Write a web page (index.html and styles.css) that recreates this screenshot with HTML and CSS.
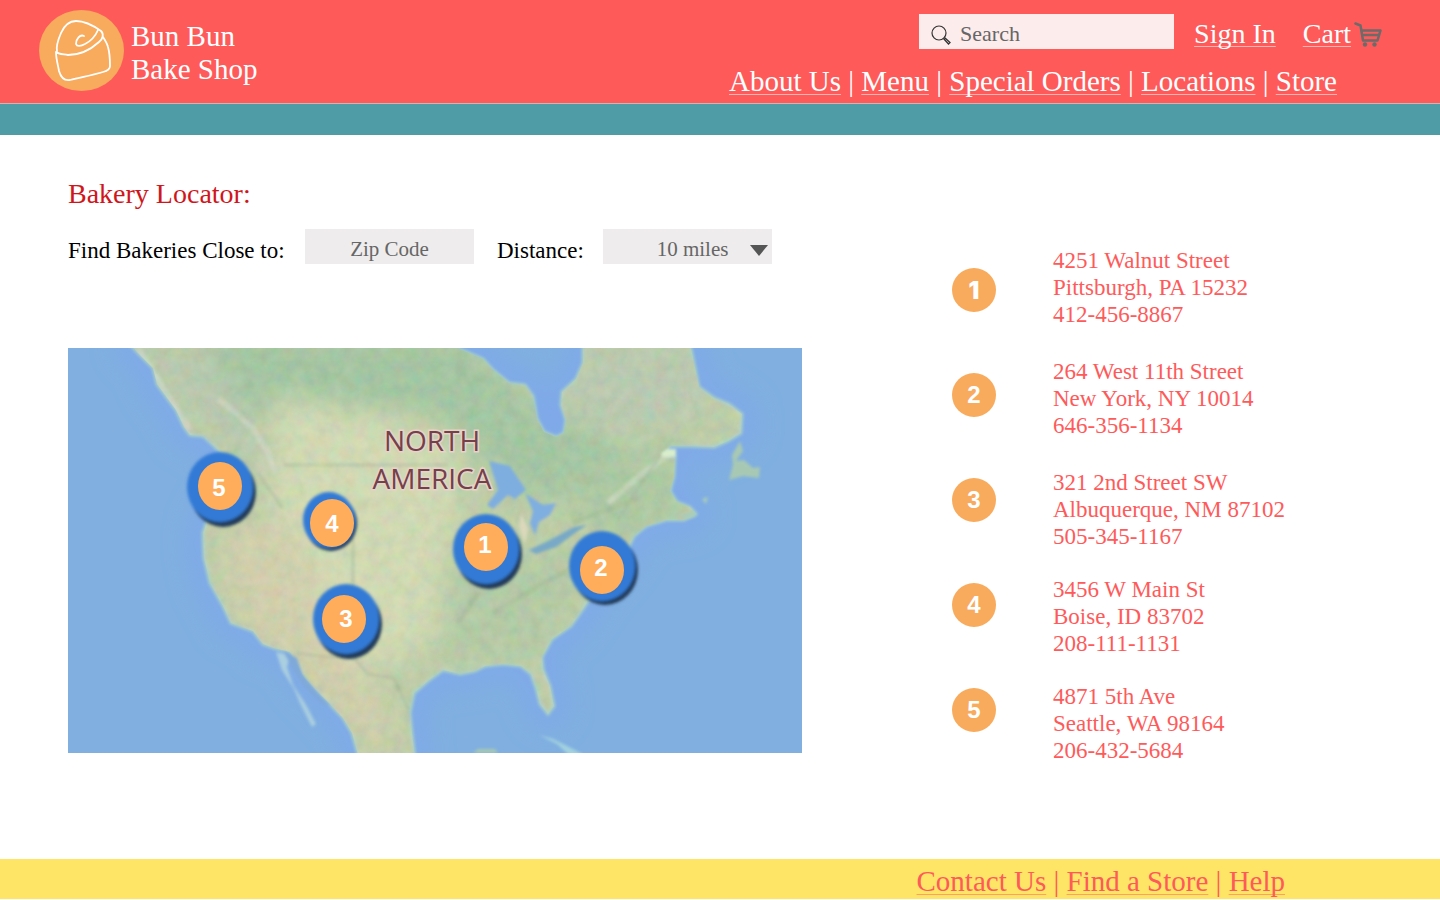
FILE: index.html
```html
<!DOCTYPE html>
<html lang="en">
<head>
<meta charset="utf-8">
<title>Bun Bun Bake Shop – Bakery Locator</title>
<link rel="stylesheet" href="styles.css">
</head>
<body>
<header class="header">
  <div class="brand">
    <svg class="brand-mark" viewBox="0 0 85 81" aria-hidden="true">
      <ellipse cx="42.500" cy="40.500" rx="42.500" ry="40.500" fill="#f8ab5d"/>
      <g fill="none" stroke="#fff" stroke-width="1.800" stroke-linecap="round" stroke-linejoin="round">
        <path d="M18 41C17 36 19 30 22 23C26 14 31 11 37 11C45 11 55 16 62 21C65 24 64 29 60 32C49 42 37 45 29 45C23 44 19 44 17 42C17 49 19 55 20 61C22 68 25 71 31 70C43 67 54 65 64 62C68 61 71 59 71 56C71 49 71 44 69 37C68 33 66 30 64 27"/>
        <path d="M45 26C41 24 37 29 37 34C38 37 42 36 46 34C52 31 56 27 59 20"/>
      </g>
    </svg>
    <div class="brand-name">Bun Bun<br>Bake Shop</div>
  </div>
  <div class="header-side">
    <div class="account">
      <label class="search">
        <svg class="search-icon" viewBox="0 0 20 20" aria-hidden="true"><circle cx="8" cy="8" r="7" fill="none" stroke="#333" stroke-width="1.200"/><path d="M12.500 13.500L17.500 19L19 17.500L13.500 12.500" fill="none" stroke="#333" stroke-width="1.300"/></svg>
        <input class="search-input" type="search" placeholder="Search" aria-label="Search">
      </label>
      <a class="link" href="#">Sign In</a>
      <span class="cart">
        <a class="link" href="#">Cart</a>
        <svg class="cart-icon" viewBox="0 0 28 25" aria-hidden="true"><path d="M1.500 1.500L6.500 3.500L9 18.500H23.500L26.500 8.500H9M9.500 13H24" fill="none" stroke="#6d6a6a" stroke-width="2.500" stroke-linecap="round" stroke-linejoin="round"/><circle cx="11" cy="22.500" r="2.200" fill="#6d6a6a"/><circle cx="20.500" cy="22.500" r="2.200" fill="#6d6a6a"/></svg>
      </span>
    </div>
    <nav class="nav"><a class="link" href="#">About Us</a> | <a class="link" href="#">Menu</a> | <a class="link" href="#">Special Orders</a> | <a class="link" href="#">Locations</a> | <a class="link" href="#">Store</a></nav>
  </div>
</header>
<div class="band"></div>
<main class="main">
  <section class="finder">
    <h1 class="title">Bakery Locator:</h1>
    <form class="filters">
      <label class="label" for="zip">Find Bakeries Close to:</label>
      <input class="field" id="zip" type="text" placeholder="Zip Code">
      <label class="label" for="distance">Distance:</label>
      <span class="select-wrap">
        <select class="field select" id="distance"><option>10 miles</option></select>
        <svg class="caret" viewBox="0 0 18 11" aria-hidden="true"><path d="M0 0H18L9 11Z" fill="#555"/></svg>
      </span>
    </form>
    <svg class="map" viewBox="0 0 734 405" role="img" aria-label="Map of bakeries in North America">
      <defs>
        <filter id="soft" x="-30%" y="-30%" width="160%" height="160%"><feGaussianBlur stdDeviation="13"/></filter>
        <filter id="edge"><feGaussianBlur stdDeviation="1.500"/></filter>
        <filter id="grain" x="0" y="0" width="100%" height="100%">
          <feTurbulence type="fractalNoise" baseFrequency="0.080" numOctaves="3" seed="8"/>
          <feColorMatrix values="0.900 0 0 0 0.200  0 0.700 0 0 0.350  0 0 0.700 0 0.200  0 0 0 0 0.220"/>
        </filter>
        <path id="land" d="M62 -4L70 5L85 20L89 36L97 47L108 62L116 79L122 87L135 88L146 98L158 110L160 140L140 170L135 185L136 210L142 235L155 258L163 275L185 283L195 296L206 300L222 304L230 318L236 329L247 341L260 354L275 370L284 385L291 410H347L344 385L342 365L346 345L360 333L375 322L392 326L407 323L417 318L435 316L453 318L463 326L468 340L472 356L480 366L486 358L482 338L475 321L474 309L484 291L503 278L515 261L526 244L558 205L566 188L578 178L598 172L616 172L628 166L622 159L609 154L602 143L606 128L607 110L596 106L602 98L622 98L646 99L660 93L673 85L674 66L661 56L646 50L631 39L627 20L622 -4H515L515 15L508 31L494 44L493 57L498 72L496 85L488 89L476 84L469 71L465 48L457 37L441 35L425 22L415 11L380 -4Z"/>
        <clipPath id="land-clip"><use href="#land"/></clipPath>
      </defs>
      <rect width="734" height="405" fill="#80afe0"/>
      <use href="#land" fill="none" stroke="#7fa9e9" stroke-width="26" stroke-linejoin="round" filter="url(#soft)"/>
      <use href="#land" fill="#b7c99f" stroke="#a6cfc9" stroke-width="3" filter="url(#edge)"/>
      <g clip-path="url(#land-clip)">
        <g filter="url(#soft)">
          <path d="M140 -10H400L470 60L560 100L550 160L450 145L370 65L250 60L160 70Z" fill="#97bf98"/>
          <path d="M208 48L275 60L330 70L395 110L385 175L370 290L290 330L235 270L200 190Z" fill="#cfd8ae"/>
          <path d="M65 0L145 10L180 70L205 110L190 125L130 65L90 40Z" fill="#b0c2a8"/>
          <path d="M150 190L210 170L240 200L250 280L290 310L335 400L300 400L220 310L170 270Z" fill="#cfcba5"/>
          <path d="M375 210L530 200L490 290L460 315L370 315Z" fill="#abc59d"/>
          <path d="M515 0H625L640 65L560 85L500 65Z" fill="#b2c4aa"/>
          <path d="M480 140L610 90L620 170L540 195Z" fill="#a2c399"/>
        </g>
        <g fill="none" filter="url(#edge)">
          <path d="M70 0L95 40L122 82M150 50L185 80L200 105L207 125M540 155L575 125L605 104" stroke="#d5ddcf" stroke-width="6" opacity=".500"/>
          <path d="M215 117H380M190 125L214 160M229 305L260 309H285L300 326L326 330L340 360M285 190V240M550 172L580 125L605 90" stroke="#94a88a" stroke-width="3" opacity=".400"/>
          <path d="M505 175L545 160L570 150M425 265L475 235L500 222M390 275L410 245" stroke="#93b28c" stroke-width="5" opacity=".500"/>
        </g>
        <rect width="734" height="405" filter="url(#grain)"/>
      </g>
      <g filter="url(#edge)">
        <path d="M208 304L214 322L226 341L232 355L244 379L248 376L238 357L225 337L219 319L222 307Z" fill="#aacfe0"/>
        <path d="M215 303L229 310L234 326L250 346L262 358L255 357L238 341L227 325Z" fill="#7fa9d9"/>
        <path d="M421 113L442 118L458 142L447 151L440 147L425 161L419 157L430 142Z" fill="#7eade0"/>
        <path d="M457 145L475 157L488 155L482 167L471 174L467 187L462 175L465 163Z" fill="#7faee0"/>
        <path d="M461 202L480 193L506 179L519 177L510 183L488 199L468 206Z" fill="#78a9c6"/>
        <path d="M453 165L460 180L457 197L451 178Z" fill="#dbd8bc"/>
        <path d="M672 93L675 103L668 113L676 112L685 120L692 119L691 130L675 128L661 132L665 117L664 107Z" fill="#a7c9b4"/>
        <path d="M593 105L599 101H608V109H594Z" fill="#d9eecb"/>
        <path d="M471 387L485 391L505 401L518 408H502L489 396Z" fill="#a2d2df"/>
        <path d="M405 405L410 401H427L430 405Z" fill="#a6c9b4"/>
        <path d="M612 167L624 164L628 168L617 171ZM634 151L640 149L638 156Z" fill="#a8cdb9"/>
      </g>
      <g class="map-title"><text x="364" y="103">NORTH</text><text x="364" y="141">AMERICA</text></g>
      <g filter="url(#edge)">
        <g fill="#203b59"><ellipse cx="155" cy="144" rx="33" ry="35"/><ellipse cx="263" cy="175" rx="26" ry="28"/><ellipse cx="281" cy="276" rx="33" ry="35"/><ellipse cx="421" cy="206" rx="33" ry="35"/><ellipse cx="537" cy="222" rx="33" ry="35"/></g>
        <g fill="#327ad6"><ellipse cx="152" cy="139" rx="33" ry="35"/><ellipse cx="261" cy="172" rx="26" ry="28"/><ellipse cx="278" cy="271" rx="33" ry="35"/><ellipse cx="418" cy="201" rx="33" ry="35"/><ellipse cx="534" cy="218" rx="33" ry="35"/></g>
      </g>
      <g fill="#ffad5b"><ellipse cx="152" cy="138" rx="22" ry="24"/><ellipse cx="264" cy="175" rx="22" ry="24"/><ellipse cx="276" cy="271" rx="22" ry="24"/><ellipse cx="418" cy="199" rx="22" ry="24"/><ellipse cx="534" cy="222" rx="22" ry="24"/></g>
      <g class="map-number"><text x="151" y="148">5</text><text x="264" y="184">4</text><text x="278" y="279">3</text><text x="417" y="205">1</text><text x="533" y="228">2</text></g>
    </svg>
  </section>
  <section class="results" aria-label="Bakeries">
    <div class="badges" aria-hidden="true">
      <span class="badge badge-first">1</span>
      <span class="badge">2</span>
      <span class="badge">3</span>
      <span class="badge">4</span>
      <span class="badge">5</span>
    </div>
    <ol class="places">
      <li class="place">4251 Walnut Street<br>Pittsburgh, PA 15232<br>412-456-8867</li>
      <li class="place">264 West 11th Street<br>New York, NY 10014<br>646-356-1134</li>
      <li class="place">321 2nd Street SW<br>Albuquerque, NM 87102<br>505-345-1167</li>
      <li class="place">3456 W Main St<br>Boise, ID 83702<br>208-111-1131</li>
      <li class="place">4871 5th Ave<br>Seattle, WA 98164<br>206-432-5684</li>
    </ol>
  </section>
</main>
<footer class="footer"><a class="link" href="#">Contact Us</a> | <a class="link" href="#">Find a Store</a> | <a class="link" href="#">Help</a></footer>
</body>
</html>
```
FILE: styles.css
```css
* {
  box-sizing: border-box;
}

body {
  margin: 0;
  min-height: 100vh;
  display: flex;
  flex-direction: column;
  padding-bottom: 1px;
  background: #fff;
  font-family: "Liberation Serif", serif;
  font-size: 23px;
  line-height: 27px;
}

.header {
  display: flex;
  justify-content: space-between;
  min-height: 104px;
  padding: 10px 58px 0 39px;
  background: #ff5a5a;
  border-bottom: 1px solid #cfb5b5;
  color: #fff;
  font-size: 28px;
  line-height: 32px;
}

.brand {
  display: flex;
  align-items: flex-start;
  gap: 7px;
}

.brand-mark {
  width: 85px;
  height: 81px;
}

.brand-name {
  padding-top: 10px;
  font-size: 29px;
  line-height: 33px;
}

.header-side {
  display: flex;
  flex-direction: column;
  align-items: flex-end;
  gap: 15px;
  padding-top: 4px;
}

.account {
  display: flex;
  align-items: flex-start;
  gap: 20px;
}

.search {
  display: flex;
  align-items: center;
  gap: 9px;
  width: 255px;
  height: 35px;
  padding: 0 12px;
  background: #fdecec;
}

.search-icon {
  flex: none;
  width: 20px;
  height: 20px;
  margin-top: 6px;
}

.search-input {
  width: 100%;
  padding: 4px 0 0;
  border: 0;
  background: transparent;
  color: #666;
  font: 22px "Liberation Serif", serif;
}

.search-input::placeholder,
.field::placeholder {
  color: #666;
  opacity: 1;
}

.link {
  color: inherit;
  text-decoration: underline 1px #ffb4b4;
  text-decoration-skip-ink: none;
  text-underline-offset: 3px;
}

.account .link {
  padding-top: 4px;
}

.cart {
  display: flex;
  align-items: center;
  gap: 3px;
  margin-left: 7px;
}

.cart-icon {
  width: 28px;
  height: 25px;
  margin-top: 4px;
}

.nav {
  padding-right: 45px;
  font-size: 29px;
}

.band {
  height: 31px;
  background: #4f9ca6;
}

.main {
  flex: 1;
  display: flex;
  gap: 150px;
  padding: 43px 68px 80px;
}

.finder {
  flex: 0 1 734px;
}

.title {
  margin: 0 0 19px;
  color: #d0161b;
  font-size: 28px;
  font-weight: 400;
  line-height: 32px;
}

.filters {
  display: flex;
  align-items: center;
  margin-bottom: 84px;
}

.label {
  flex: none;
  width: 237px;
  padding-top: 7px;
}

.select-wrap {
  position: relative;
}

.filters .label:nth-of-type(2) {
  width: 106px;
  margin-left: 23px;
}

.field {
  display: block;
  width: 169px;
  height: 35px;
  padding: 5px 0 0;
  border: 0;
  border-radius: 0;
  background: #eeecec;
  color: #666;
  font: 21px "Liberation Serif", serif;
  text-align: center;
}

.select {
  appearance: none;
  padding-left: 10px;
}

.caret {
  position: absolute;
  right: 4px;
  top: 16px;
  width: 18px;
  height: 11px;
  pointer-events: none;
}

.map {
  display: block;
  width: 100%;
}

.map-title {
  fill: #74404a;
  stroke: #e6d3c8;
  stroke-width: 3px;
  paint-order: stroke;
  font: 500 28px "Open Sans", sans-serif;
  text-anchor: middle;
}

.map-number {
  fill: #fff;
  font: bold 24px "Liberation Sans", sans-serif;
  text-anchor: middle;
}

.results {
  display: flex;
  gap: 57px;
  padding-top: 69px;
}

.badges {
  display: flex;
  flex-direction: column;
  gap: 61px;
  padding-top: 21px;
}

.badge {
  display: flex;
  align-items: center;
  justify-content: center;
  width: 44px;
  height: 44px;
  border-radius: 50%;
  background: #f8ab5d;
  color: #fff;
  font: bold 24px "Liberation Sans", sans-serif;
}

.badge-first {
  font-family: Inter, sans-serif;
  font-weight: 900;
}

.places {
  margin: 0;
  padding: 0;
  list-style: none;
  color: #ff5a5a;
}

.place {
  margin-bottom: 26px;
}

.place:nth-child(-n+2) {
  margin-bottom: 30px;
}

.place:last-child {
  margin-bottom: 0;
}

.footer {
  padding: 6px 155px 2px;
  background: #ffe566;
  color: #ff5a5a;
  font-size: 29px;
  line-height: 32px;
  text-align: right;
}

.footer .link {
  text-decoration-color: #ff9f60;
}
```
